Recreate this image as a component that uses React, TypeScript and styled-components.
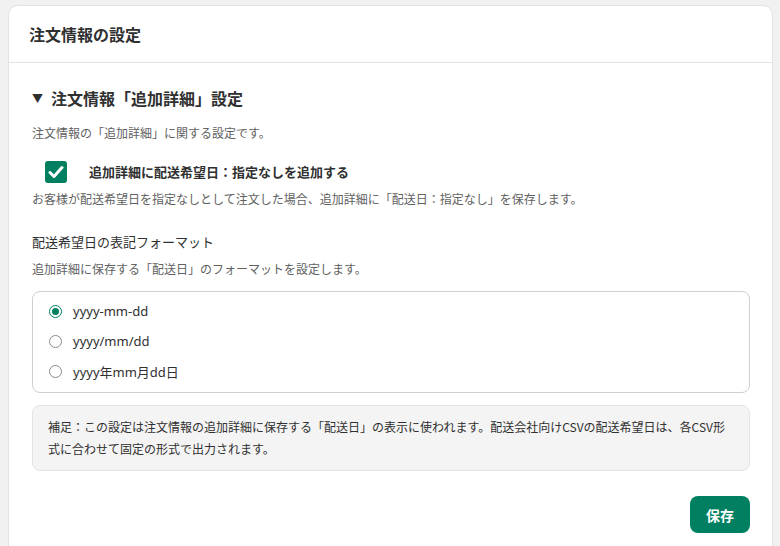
import React, { useState } from "react";
import styled, { createGlobalStyle } from "styled-components";

const Global = createGlobalStyle`
  html, body {
    margin: 0;
    background: #f1f1f1;
  }
  body {
    padding: 5px 7px 0 8px;
    font-family: "Noto Sans CJK JP", "Noto Sans", sans-serif;
    color: #303030;
  }
`;

const Card = styled.section`
  background: #fff;
  border: 1px solid #e3e3e3;
  border-radius: 10px;
  padding-bottom: 24px;
`;

const Header = styled.header`
  height: 56px;
  display: flex;
  align-items: center;
  padding: 0 20px;
  border-bottom: 1px solid #e3e3e3;
`;

const Title = styled.h2`
  margin: 0;
  font-size: 16px;
  font-weight: 700;
  color: #303030;
`;

const Body = styled.div`
  padding: 23px 22px 0 23px;
`;

const SectionTitle = styled.h3`
  margin: 0;
  font-size: 16px;
  line-height: 24px;
  font-weight: 700;
  display: flex;
  align-items: center;
  gap: 8px;
`;

const Caret = styled.span`
  font-size: 11px;
`;

const Help = styled.p<{ $top: number }>`
  margin: ${({ $top }) => $top}px 0 0;
  font-size: 12px;
  line-height: 18px;
  color: #616161;
`;

const CheckRow = styled.label`
  margin-top: 19px;
  padding-left: 13px;
  display: flex;
  align-items: center;
  gap: 22px;
  font-size: 13px;
  font-weight: 700;
  line-height: 22px;
  cursor: pointer;
`;

const CheckBox = styled.span<{ $on: boolean }>`
  width: 22px;
  height: 22px;
  border-radius: 3px;
  background: ${({ $on }) => ($on ? "#008060" : "#fff")};
  border: ${({ $on }) => ($on ? "none" : "1px solid #8a8a8a")};
  display: flex;
  align-items: center;
  justify-content: center;
`;

const FieldLabel = styled.div`
  margin-top: 24px;
  font-size: 13px;
  line-height: 20px;
  color: #303030;
`;

const RadioGroup = styled.div`
  margin-top: 13px;
  border: 1px solid #cfcfcf;
  border-radius: 8px;
  padding: 4px 16px 6px;
`;

const RadioRow = styled.label`
  height: 30px;
  display: flex;
  align-items: center;
  gap: 11px;
  font-family: "Noto Sans", "Noto Sans CJK JP", sans-serif;
  font-size: 13px;
  cursor: pointer;
`;

const RadioDot = styled.span<{ $on: boolean }>`
  width: 13px;
  height: 13px;
  box-sizing: border-box;
  border-radius: 50%;
  border: 1px solid ${({ $on }) => ($on ? "#008060" : "#8a8a8a")};
  display: flex;
  align-items: center;
  justify-content: center;

  &::after {
    content: "";
    width: 7px;
    height: 7px;
    border-radius: 50%;
    background: ${({ $on }) => ($on ? "#008060" : "transparent")};
  }
`;

const Note = styled.div`
  margin-top: 12px;
  background: #f4f4f4;
  border: 1px solid #e3e3e3;
  border-radius: 8px;
  padding: 10px 15px;
  font-size: 12px;
  line-height: 22px;
  color: #303030;
`;

const Actions = styled.div`
  margin-top: 25px;
  display: flex;
  justify-content: flex-end;
`;

const SaveBtn = styled.button`
  appearance: none;
  border: none;
  cursor: pointer;
  width: 60px;
  height: 37px;
  border-radius: 8px;
  background: #008060;
  color: #fff;
  font-family: inherit;
  font-size: 14px;
  font-weight: 600;
`;

const formats = ["yyyy-mm-dd", "yyyy/mm/dd", "yyyy年mm月dd日"];

export default function App() {
  const [checked, setChecked] = useState(true);
  const [format, setFormat] = useState(formats[0]);

  return (
    <>
      <Global />
      <Card>
        <Header>
          <Title>注文情報の設定</Title>
        </Header>
        <Body>
          <SectionTitle>
            <Caret>▼</Caret>
            注文情報「追加詳細」設定
          </SectionTitle>
          <Help $top={14}>注文情報の「追加詳細」に関する設定です。</Help>

          <CheckRow onClick={() => setChecked(!checked)}>
            <CheckBox $on={checked}>
              {checked && (
                <svg width="16" height="14" viewBox="0 0 16 14">
                  <path
                    d="M2 7.5 L6 11.5 L14 2.5"
                    fill="none"
                    stroke="#fff"
                    strokeWidth="3"
                    strokeLinecap="round"
                    strokeLinejoin="round"
                  />
                </svg>
              )}
            </CheckBox>
            追加詳細に配送希望日：指定なしを追加する
          </CheckRow>
          <Help $top={7}>
            お客様が配送希望日を指定なしとして注文した場合、追加詳細に「配送日：指定なし」を保存します。
          </Help>

          <FieldLabel>配送希望日の表記フォーマット</FieldLabel>
          <Help $top={8}>追加詳細に保存する「配送日」のフォーマットを設定します。</Help>

          <RadioGroup>
            {formats.map((f) => (
              <RadioRow key={f} onClick={() => setFormat(f)}>
                <RadioDot $on={format === f} />
                {f}
              </RadioRow>
            ))}
          </RadioGroup>

          <Note>
            補足：この設定は注文情報の追加詳細に保存する「配送日」の表示に使われます。配送会社向けCSVの配送希望日は、各CSV形式に合わせて固定の形式で出力されます。
          </Note>

          <Actions>
            <SaveBtn type="button">保存</SaveBtn>
          </Actions>
        </Body>
      </Card>
    </>
  );
}
